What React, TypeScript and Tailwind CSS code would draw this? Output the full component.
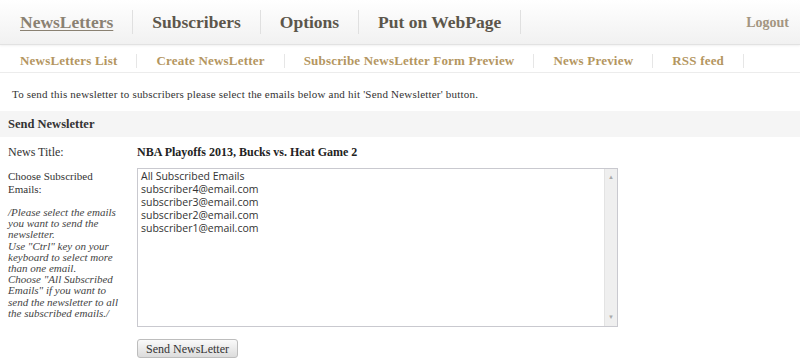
import React from 'react';

const topLinks = ['Subscribers', 'Options', 'Put on WebPage'];
const subLinks = ['NewsLetters List', 'Create NewsLetter', 'Subscribe NewsLetter Form Preview', 'News Preview', 'RSS feed'];
const emails = ['All Subscribed Emails', 'subscriber4@email.com', 'subscriber3@email.com', 'subscriber2@email.com', 'subscriber1@email.com'];
const note = [
  '/Please select the emails',
  'you want to send the',
  'newsletter.',
  'Use "Ctrl" key on your',
  'keyboard to select more',
  'than one email.',
  'Choose "All Subscribed',
  'Emails" if you want to',
  'send the newsletter to all',
  'the subscribed emails./',
];

export default function App() {
  return (
    <div className="w-[800px] h-[364px] bg-white overflow-hidden font-['Liberation_Serif',serif] text-[#333]">
      {/* main nav */}
      <div className="h-[45px] flex items-center border-b border-[#e2e2e2] bg-gradient-to-b from-white to-[#f1f1f1] shadow-[0_1px_2px_rgba(0,0,0,0.06)]">
        <a className="ml-[20px] pr-[19px] text-[17.5px] font-bold text-[#8a8172] underline decoration-1 underline-offset-2">NewsLetters</a>
        {topLinks.map((l) => (
          <div key={l} className="flex items-center">
            <span className="w-px h-[24px] bg-[#e0e0e0]" />
            <a className="px-[19px] text-[17.5px] font-bold text-[#5c564b]">{l}</a>
          </div>
        ))}
        <span className="w-px h-[24px] bg-[#e0e0e0]" />
        <a className="ml-auto mr-[11px] text-[14px] font-bold text-[#a39581]">Logout</a>
      </div>

      {/* sub nav */}
      <div className="h-[28px] pt-[4px] flex items-center border-b border-[#ececec]">
        {subLinks.map((l, i) => (
          <div key={l} className="flex items-center">
            <a className={`${i === 0 ? 'pl-[20px]' : 'pl-[19px]'} pr-[19px] text-[13px] tracking-[0.2px] font-bold text-[#b4965f]`}>{l}</a>
            <span className="w-px h-[14px] bg-[#e6e6e6]" />
          </div>
        ))}
      </div>

      <p className="px-[12px] pt-[14px] text-[11px] tracking-[0.2px] leading-[14px] text-[#333]">
        To send this newsletter to subscribers please select the emails below and hit 'Send Newsletter' button.
      </p>

      <div className="mt-[10px] h-[26px] flex items-center px-[8px] bg-[#f5f5f5] text-[12.5px] font-bold text-[#333]">
        Send Newsletter
      </div>

      <div className="flex px-[8px] pt-[8px] text-[12px] leading-[15px]">
        <div className="w-[129px]">News Title:</div>
        <div className="font-bold text-[#222]">NBA Playoffs 2013, Bucks vs. Heat Game 2</div>
      </div>

      <div className="flex px-[8px] pt-[8px]">
        <div className="w-[129px] pt-[2px] text-[11px]">
          <div className="w-[100px] leading-[13px]">Choose Subscribed Emails:</div>
          <div className="mt-[11px] italic leading-[11.2px] text-[#444] whitespace-nowrap">
            {note.map((n) => (
              <div key={n}>{n}</div>
            ))}
          </div>
        </div>
        <div>
          <div className="w-[481px] h-[159px] border border-[#c9c9cf] bg-white flex">
            <div className="flex-1 pl-[3px] pt-[1px] font-['Open_Sans',sans-serif] text-[10.5px] leading-[13px] text-[#333]">
              {emails.map((e) => (
                <div key={e}>{e}</div>
              ))}
            </div>
            <div className="w-[13px] bg-[#efefef] border-l border-[#e3e3e3] flex flex-col justify-between items-center py-[4px] text-[6px] text-[#aaa]">
              <span>▲</span>
              <span>▼</span>
            </div>
          </div>
          <button className="block mt-[12px] w-[101px] h-[19px] border border-[#bdbdbd] rounded-[3px] bg-gradient-to-b from-[#fafafa] to-[#dcdcdc] text-[12px] text-[#333]">
            Send NewsLetter
          </button>
        </div>
      </div>
    </div>
  );
}
